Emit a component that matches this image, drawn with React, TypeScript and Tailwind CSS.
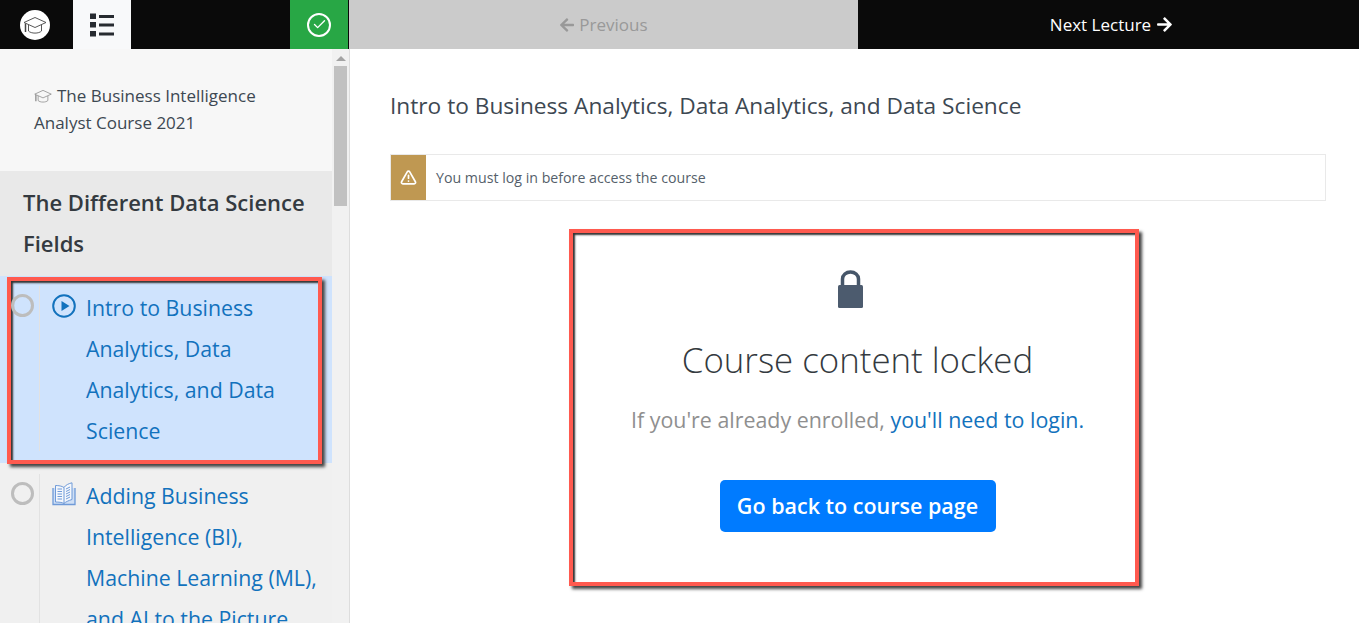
import type { ReactNode } from "react";
import { Check, TriangleAlert } from "lucide-react";
import { FaArrowLeft, FaArrowRight } from "react-icons/fa";

const CapIcon = ({ className }: { className?: string }) => (
  <svg viewBox="0 0 24 24" fill="none" stroke="currentColor" strokeWidth="0.9" className={className}>
    <path d="M12 4.500 1 9.500l11 5 11-5z" />
    <path d="M5.500 12v6c2.500 2.800 10.500 2.800 13 0v-6" />
    <path d="M2.500 10.500V19" strokeWidth="1.500" />
  </svg>
);

const BookIcon = () => (
  <svg viewBox="0 0 24 24" fill="none" stroke="#6f9ad8" strokeWidth="1" className="size-6 shrink-0">
    <path d="M1 6v16.500h22V6" fill="#cfdff5" strokeWidth="1.300" />
    <path d="M12 5.500C10 4 6.500 3.500 3.500 3.500v16.500c3 0 6.500.3 8.500 1.500 1.500-1.500 4.500-3 8-4V.8C17 1.500 13.500 3 12 5.500z" fill="#f4f7fc" />
    <path d="M12 5.500v16M5.500 7h4.500M5.500 9.500h4.500M5.500 12h4.500M5.500 14.500h4.500M5.500 17h4.500M14 7l4-2M14 9.500l4-2M14 12l4-2M14 14.500l4-2M14 17l4-2" />
  </svg>
);

const PlayIcon = () => (
  <svg viewBox="0 0 24 24" fill="none" className="size-6 shrink-0 text-[#1272bd]">
    <circle cx="12" cy="12" r="10.800" stroke="currentColor" strokeWidth="2" />
    <path d="M9.500 7v10l8-5z" fill="currentColor" />
  </svg>
);

const ListIcon = () => (
  <svg viewBox="0 0 24 24" fill="#272b30" className="size-6">
    <rect x="0" y="0.500" width="6" height="5.500" />
    <rect x="0" y="9" width="6" height="5.500" />
    <rect x="0" y="18" width="6" height="5.500" />
    <rect x="9" y="2" width="15" height="3" />
    <rect x="9" y="10.500" width="15" height="3" />
    <rect x="9" y="19.500" width="15" height="3" />
  </svg>
);

const LockIcon = () => (
  <svg viewBox="0 0 25 38" className="mr-[15px] h-[38px] w-[25px]">
    <path d="M4.500 17V9a8 7 0 0 1 16 0v8" fill="none" stroke="#465669" strokeWidth="3.500" />
    <rect x="0" y="15" width="25" height="23" rx="1.500" fill="#4c5b6e" />
  </svg>
);

const Lesson = ({ icon, title }: { icon: ReactNode; title: string[] }) => (
  <div className="flex">
    <div className="w-[29px] shrink-0 border-r border-[#e2e2e2] pt-2">
      <div className="size-[23px] rounded-full border-[3px] border-[#bdbdbd]" />
    </div>
    <div className="pl-3 pt-2">{icon}</div>
    <div className="pl-[10px] pt-px">
      {title.map((line) => (
        <div key={line} className="whitespace-nowrap text-[21.3px] leading-[41px] text-[#1272bd]">
          {line}
        </div>
      ))}
    </div>
  </div>
);

const Sidebar = () => (
  <aside className="flex h-[574px] w-[350px] shrink-0 overflow-hidden border-r border-[#dddddd] bg-[#f0f0f0]">
    <div className="w-[332px] shrink-0">
      <div className="h-[122px] bg-[#f7f7f7] pl-[34px] pt-[33px] text-[17px] leading-[27px] text-[#3d4852]">
        <CapIcon className="mr-[5px] inline-block size-[18px] -translate-y-px text-[#7c7c7c]" />
        The Business Intelligence
        <br />
        Analyst Course 2021
      </div>
      <div className="h-[105px] bg-[#e9e9e9] pl-[23px] pt-[11px] text-[22px] font-semibold leading-[41px] text-[#343a40]">
        The Different Data Science
        <br />
        Fields
      </div>
      <div className="h-[187px] bg-[#cfe3fd] pl-[7px] pr-[10px] pt-px">
        <div className="h-[187px] border-4 border-[#ff5a4f] pt-[5px] shadow-[inset_2px_2px_2px_#333,3px_3px_3px_#444]">
          <Lesson icon={<PlayIcon />} title={["Intro to Business", "Analytics, Data", "Analytics, and Data", "Science"]} />
        </div>
      </div>
      <div className="pl-[11px] pt-[11px]">
        <Lesson
          icon={<BookIcon />}
          title={["Adding Business", "Intelligence (BI),", "Machine Learning (ML),", "and AI to the Picture"]}
        />
      </div>
    </div>
    <div className="flex w-[17px] shrink-0 flex-col items-center bg-[#f1f1f1] pt-[7px]">
      <div className="size-0 border-x-[5px] border-b-[5px] border-x-transparent border-b-[#a3a3a3]" />
      <div className="mt-[5px] h-[140px] w-[13px] shrink-0 bg-[#c1c1c1]" />
    </div>
  </aside>
);

const TopBar = () => (
  <header className="flex h-[49px] bg-[#0a0a0a]">
    <div className="flex w-[73px] items-center pl-[20px]">
      <div className="flex size-[30px] items-center justify-center rounded-full bg-white text-[#444]">
        <CapIcon className="size-[24px]" />
      </div>
    </div>
    <div className="flex w-[58px] items-center justify-center bg-[#f8f9fa]">
      <ListIcon />
    </div>
    <div className="w-[159px]" />
    <div className="flex w-[58px] items-center justify-center bg-[#28a745]">
      <div className="flex size-[24px] items-center justify-center rounded-full border-2 border-white">
        <Check className="size-[15px] text-white" strokeWidth={2.2} />
      </div>
    </div>
    <div className="ml-px flex w-[509px] items-center justify-center gap-[4px] bg-[#cbcbcb] text-[17px] text-[#999]">
      <FaArrowLeft className="size-[16px]" />
      Previous
    </div>
    <div className="flex flex-1 items-center justify-center gap-[5px] pl-[6px] text-[17px] text-white">
      Next Lecture
      <FaArrowRight className="size-[17px]" />
    </div>
  </header>
);

const Main = () => (
  <main className="flex min-w-0 flex-1 flex-col pl-[40px] pr-[33px] pt-[40px]">
    <h1 className="whitespace-nowrap text-[22.7px] leading-[33px] text-[#3d4852]">
      Intro to Business Analytics, Data Analytics, and Data Science
    </h1>
    <div className="mt-[32px] flex h-[47px] items-stretch border border-[#e9e9e9]">
      <div className="flex w-[35px] items-center justify-center bg-[#bf9852]">
        <TriangleAlert className="size-[17px] text-white" strokeWidth={2.4} />
      </div>
      <div className="flex items-center pl-[10px] text-[14.2px] text-[#555f6b]">You must log in before access the course</div>
    </div>
    <section className="ml-[179px] mt-[28px] flex h-[357px] w-[570px] flex-col items-center border-4 border-[#ff5a4f] pl-[7px] pt-[37px] shadow-[inset_2px_2px_2px_#333,3px_3px_3px_#444]">
      <LockIcon />
      <div className="mt-[25px] text-[34.8px] font-light leading-[54px] text-[#343a40]">Course content locked</div>
      <p className="mt-[16px] text-[21.4px] leading-[33px] text-[#8f8f8f]">
        If you're already enrolled, <span className="text-[#1272bd]">you'll need to login.</span>
      </p>
      <button className="mt-[44px] h-[52px] w-[276px] rounded-[5px] bg-[#007bff] text-[21.5px] font-semibold text-white">
        Go back to course page
      </button>
    </section>
  </main>
);

export default function App() {
  return (
    <div className="flex h-[623px] flex-col overflow-hidden bg-white font-['Open_Sans','Noto_Sans',sans-serif]">
      <TopBar />
      <div className="flex min-h-0 flex-1">
        <Sidebar />
        <Main />
      </div>
    </div>
  );
}
